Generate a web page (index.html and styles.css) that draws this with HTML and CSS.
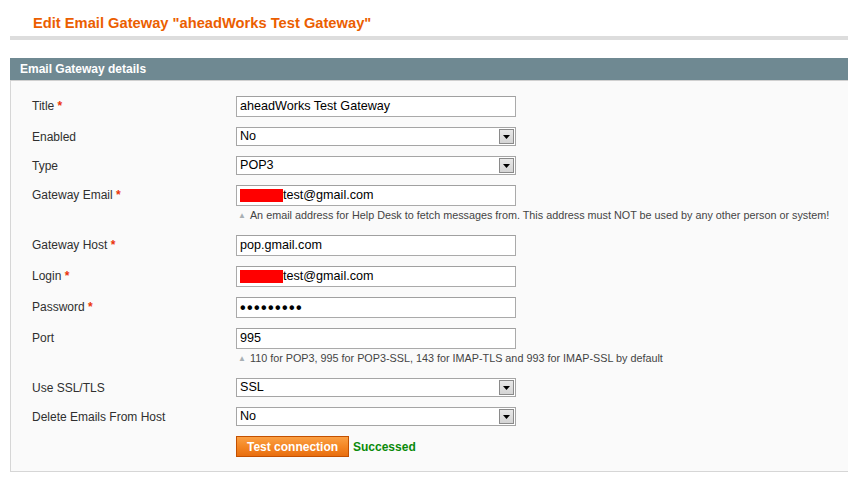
FILE: index.html
```html
<!DOCTYPE html>
<html>
<head>
<meta charset="utf-8">
<link rel="stylesheet" href="styles.css">
</head>
<body>
<div class="page">
  <div class="page-head">
    <h3 class="page-title">Edit Email Gateway "aheadWorks Test Gateway"</h3>
  </div>
  <div class="panel">
    <div class="panel-head">Email Gateway details</div>
    <div class="panel-body">
      <div class="row">
        <div class="label">Title <span class="req">*</span></div>
        <div class="value"><div class="input">aheadWorks Test Gateway</div></div>
      </div>
      <div class="row">
        <div class="label">Enabled</div>
        <div class="value"><div class="select"><span>No</span><span class="arrow"><svg width="7" height="4" viewBox="0 0 7 4"><path d="M0 0H7L3.5 4Z" fill="#000"/></svg></span></div></div>
      </div>
      <div class="row">
        <div class="label">Type</div>
        <div class="value"><div class="select"><span>POP3</span><span class="arrow"><svg width="7" height="4" viewBox="0 0 7 4"><path d="M0 0H7L3.5 4Z" fill="#000"/></svg></span></div></div>
      </div>
      <div class="row">
        <div class="label">Gateway Email <span class="req">*</span></div>
        <div class="value">
          <div class="input"><span class="redact"></span>test@gmail.com</div>
          <div class="note"><span class="tri">▲</span>An email address for Help Desk to fetch messages from. This address must NOT be used by any other person or system!</div>
        </div>
      </div>
      <div class="row">
        <div class="label">Gateway Host <span class="req">*</span></div>
        <div class="value"><div class="input">pop.gmail.com</div></div>
      </div>
      <div class="row">
        <div class="label">Login <span class="req">*</span></div>
        <div class="value"><div class="input"><span class="redact"></span>test@gmail.com</div></div>
      </div>
      <div class="row">
        <div class="label">Password <span class="req">*</span></div>
        <div class="value"><div class="input"><span class="dots">•••••••••</span></div></div>
      </div>
      <div class="row">
        <div class="label">Port</div>
        <div class="value">
          <div class="input">995</div>
          <div class="note"><span class="tri">▲</span>110 for POP3, 995 for POP3-SSL, 143 for IMAP-TLS and 993 for IMAP-SSL by default</div>
        </div>
      </div>
      <div class="row">
        <div class="label">Use SSL/TLS</div>
        <div class="value"><div class="select"><span>SSL</span><span class="arrow"><svg width="7" height="4" viewBox="0 0 7 4"><path d="M0 0H7L3.5 4Z" fill="#000"/></svg></span></div></div>
      </div>
      <div class="row">
        <div class="label">Delete Emails From Host</div>
        <div class="value"><div class="select"><span>No</span><span class="arrow"><svg width="7" height="4" viewBox="0 0 7 4"><path d="M0 0H7L3.5 4Z" fill="#000"/></svg></span></div></div>
      </div>
      <div class="row">
        <div class="label"></div>
        <div class="value actions"><button class="btn">Test connection</button><span class="ok">Successed</span></div>
      </div>
    </div>
  </div>
</div>
</body>
</html>
```
FILE: styles.css
```css
html, body {
  margin: 0;
  padding: 0;
  background: #fff;
  overflow: hidden;
}
body {
  font-family: "Liberation Sans", Arial, sans-serif;
  font-size: 12px;
  color: #2f2f2f;
}
.page {
  padding-left: 10px;
}
.page-head {
  border-bottom: 4px solid #dddddd;
  padding: 14px 0 0 23px;
  height: 22px;
}
.page-title {
  margin: 0;
  font-size: 14.7px;
  line-height: 18px;
  font-weight: bold;
  color: #eb5e00;
}
.panel {
  margin-top: 18px;
}
.panel-head {
  background: #6f8992;
  color: #fff;
  font-weight: bold;
  font-size: 12px;
  line-height: 22px;
  height: 22px;
  padding-left: 10px;
  border-bottom: 1px solid #d0d0d0;
}
.panel-body {
  background: #fafafa;
  border-left: 1px solid #d6d6d6;
  border-bottom: 1px solid #d6d6d6;
  padding: 15px 0 14px 21px;
  display: flex;
  flex-direction: column;
  gap: 10px;
}
.row {
  display: flex;
  align-items: flex-start;
}
.label {
  width: 204px;
  flex: none;
  line-height: 18px;
  padding-top: 1px;
}
.req {
  color: #eb340a;
  font-weight: bold;
}
.value {
  width: 600px;
}
.input {
  box-sizing: border-box;
  width: 280px;
  height: 21px;
  border: 1px solid #aaaaaa;
  border-top-color: #a0a0a0;
  background: #fff;
  color: #000;
  font-size: 12.6px;
  line-height: 19px;
  padding-left: 3px;
  display: flex;
  align-items: center;
  white-space: nowrap;
}
.redact {
  display: inline-block;
  width: 43px;
  height: 13px;
  background: #ff0000;
}
.dots {
  font-size: 16px;
  letter-spacing: 1.4px;
  font-weight: bold;
  line-height: 19px;
}
.select {
  box-sizing: border-box;
  width: 280px;
  height: 19px;
  border: 1px solid #a5a5a5;
  background: #fff;
  color: #000;
  font-size: 12.6px;
  line-height: 17px;
  padding-left: 3px;
  display: flex;
  justify-content: space-between;
  align-items: center;
}
.arrow {
  box-sizing: border-box;
  width: 15px;
  height: 15px;
  margin-right: 1px;
  border: 1px solid #8a8a8a;
  background: linear-gradient(#e8e8e8, #d4d4d4);
  display: flex;
  align-items: center;
  justify-content: center;
}
.note {
  font-size: 10.8px;
  line-height: 14px;
  margin-top: 2px;
  padding-bottom: 2px;
  color: #444;
  white-space: nowrap;
}
.tri {
  color: #a8b0b4;
  font-size: 8px;
  margin: 0 4px 0 2px;
  vertical-align: 1px;
}
.actions {
  display: flex;
  align-items: center;
}
.btn {
  box-sizing: border-box;
  width: 113px;
  height: 21px;
  border: 1px solid #c35000;
  background: linear-gradient(#fba043, #f38422 55%, #e86e10);
  color: #fff;
  font-family: "Liberation Sans", Arial, sans-serif;
  font-weight: bold;
  font-size: 12px;
  padding: 0;
  margin: 0;
}
.ok {
  color: #0a8a0a;
  font-weight: bold;
  margin-left: 4px;
}
```
